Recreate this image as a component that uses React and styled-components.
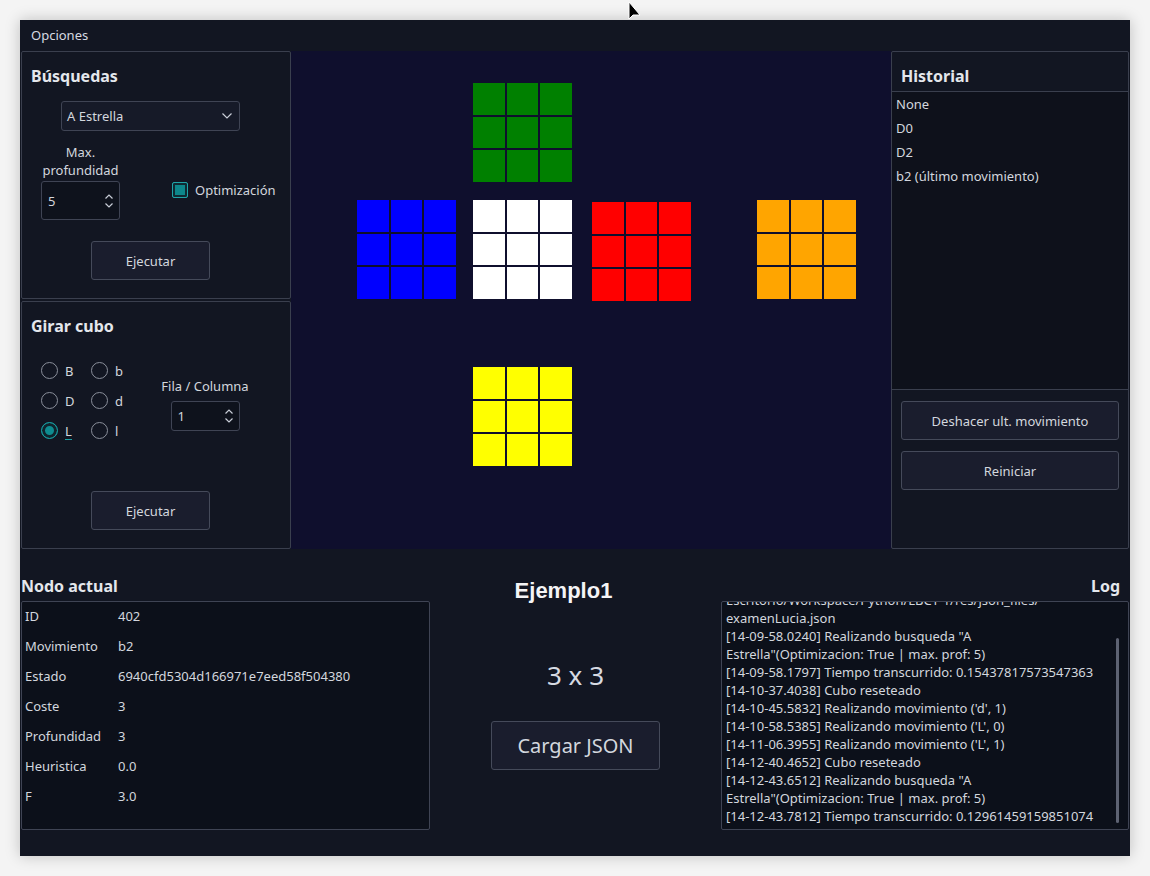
import React from 'react';
import styled, { createGlobalStyle } from 'styled-components';

const GlobalStyle = createGlobalStyle`
  html, body {
    margin: 0;
    padding: 0;
    background: #f4f4f4;
  }
  * {
    box-sizing: border-box;
  }
`;

const history = ['None', 'D0', 'D2', 'b2 (último movimiento)'];

const nodeInfo = [
  ['ID', '402'],
  ['Movimiento', 'b2'],
  ['Estado', '6940cfd5304d166971e7eed58f504380'],
  ['Coste', '3'],
  ['Profundidad', '3'],
  ['Heuristica', '0.0'],
  ['F', '3.0'],
];

const logLines = [
  'Escritorio/Workspace/Python/LBCT-1/res/json_files/',
  'examenLucia.json',
  '[14-09-58.0240] Realizando busqueda "A',
  'Estrella"(Optimizacion: True | max. prof: 5)',
  '[14-09-58.1797] Tiempo transcurrido: 0.15437817573547363',
  '[14-10-37.4038] Cubo reseteado',
  "[14-10-45.5832] Realizando movimiento ('d', 1)",
  "[14-10-58.5385] Realizando movimiento ('L', 0)",
  "[14-11-06.3955] Realizando movimiento ('L', 1)",
  '[14-12-40.4652] Cubo reseteado',
  '[14-12-43.6512] Realizando busqueda "A',
  'Estrella"(Optimizacion: True | max. prof: 5)',
  '[14-12-43.7812] Tiempo transcurrido: 0.12961459159851074',
];

// cara del cubo: posicion en el lienzo + color
const faces = [
  { x: 182, y: 32, color: '#008000' },
  { x: 66, y: 149, color: '#0000ff' },
  { x: 182, y: 149, color: '#ffffff' },
  { x: 301, y: 151, color: '#ff0000' },
  { x: 466, y: 149, color: '#ffa500' },
  { x: 182, y: 316, color: '#ffff00' },
];

const radios = [
  ['B', 'b'],
  ['D', 'd'],
  ['L', 'l'],
];

const SpinArrows = () => (
  <svg width="12" height="18" viewBox="0 0 12 18">
    <path d="M2.5 6.5 L6 3 L9.5 6.5" fill="none" stroke="#c9ced8" strokeWidth="1.2" />
    <path d="M2.5 11.5 L6 15 L9.5 11.5" fill="none" stroke="#c9ced8" strokeWidth="1.2" />
  </svg>
);

const Chevron = () => (
  <svg width="12" height="8" viewBox="0 0 12 8">
    <path d="M1.5 1.5 L6 6 L10.5 1.5" fill="none" stroke="#c9ced8" strokeWidth="1.2" />
  </svg>
);

const App = () => {
  return (
    <>
      <GlobalStyle />
      <Page>
        <Cursor width="16" height="20" viewBox="0 0 16 20">
          <path d="M1 0 L1 17 L5 13 L12 13 Z" fill="#000" stroke="#fff" strokeWidth="1" />
        </Cursor>
        <Window>
          <MenuBar>Opciones</MenuBar>
          <TopArea>
            <LeftColumn>
              <Panel>
                <PanelTitle>Búsquedas</PanelTitle>
                <Combo>
                  <span>A Estrella</span>
                  <Chevron />
                </Combo>
                <OptionsRow>
                  <DepthColumn>
                    <SmallLabel>Max.<br />profundidad</SmallLabel>
                    <SpinBox $width={79} $height={39}>
                      <span>5</span>
                      <SpinArrows />
                    </SpinBox>
                  </DepthColumn>
                  <CheckWrap>
                    <CheckBox />
                    <span>Optimización</span>
                  </CheckWrap>
                </OptionsRow>
                <Button $top={21}>Ejecutar</Button>
              </Panel>
              <Panel>
                <PanelTitle>Girar cubo</PanelTitle>
                <RotateRow>
                  <RadioGrid>
                    {radios.map((pair) =>
                      pair.map((label) => (
                        <RadioItem key={label}>
                          <Radio $checked={label === 'L'} />
                          <RadioLabel $mnemonic={label === 'L'}>{label}</RadioLabel>
                        </RadioItem>
                      ))
                    )}
                  </RadioGrid>
                  <RowColumn>
                    <SmallLabel>Fila / Columna</SmallLabel>
                    <SpinBox $width={69} $height={30}>
                      <span>1</span>
                      <SpinArrows />
                    </SpinBox>
                  </RowColumn>
                </RotateRow>
                <Button $top={46}>Ejecutar</Button>
              </Panel>
            </LeftColumn>

            <Canvas>
              {faces.map((f, i) => (
                <Face key={i} style={{ left: f.x, top: f.y }}>
                  {Array.from({ length: 9 }).map((_, j) => (
                    <Sticker key={j} $color={f.color} />
                  ))}
                </Face>
              ))}
            </Canvas>

            <RightPanel>
              <HistoryHeader>Historial</HistoryHeader>
              <HistoryList>
                {history.map((h) => (
                  <HistoryItem key={h}>{h}</HistoryItem>
                ))}
              </HistoryList>
              <HistoryActions>
                <WideButton>Deshacer ult. movimiento</WideButton>
                <WideButton>Reiniciar</WideButton>
              </HistoryActions>
            </RightPanel>
          </TopArea>

          <BottomArea>
            <InfoColumn $width={409}>
              <SectionLabel>Nodo actual</SectionLabel>
              <InfoBox>
                {nodeInfo.map(([k, v]) => (
                  <InfoRow key={k}>
                    <InfoKey>{k}</InfoKey>
                    <span>{v}</span>
                  </InfoRow>
                ))}
              </InfoBox>
            </InfoColumn>

            <CenterColumn>
              <ExampleName>Ejemplo1</ExampleName>
              <SizeText>3 x 3</SizeText>
              <LoadButton>Cargar JSON</LoadButton>
            </CenterColumn>

            <InfoColumn $width={408}>
              <SectionLabel $right>Log</SectionLabel>
              <LogBox>
                <LogContent>
                  {logLines.map((l, i) => (
                    <LogLine key={i}>{l}</LogLine>
                  ))}
                </LogContent>
                <ScrollThumb />
              </LogBox>
            </InfoColumn>
          </BottomArea>
        </Window>
      </Page>
    </>
  );
};

export default App;

const Page = styled.div`
  position: relative;
  width: 1150px;
  height: 876px;
  padding: 20px;
  background: #f4f4f4;
  font-family: "Noto Sans", "Open Sans", sans-serif;
  font-size: 13px;
  color: #d3d7de;
`;

const Cursor = styled.svg`
  position: absolute;
  left: 628px;
  top: 2px;
`;

const Window = styled.div`
  width: 1110px;
  height: 836px;
  background: #121622;
  box-shadow: 0 0 14px rgba(0, 0, 0, 0.22);
  display: flex;
  flex-direction: column;
  padding: 0 1px;
`;

const MenuBar = styled.div`
  height: 31px;
  padding: 0 10px 2px;
  display: flex;
  align-items: center;
  color: #d6dae1;
`;

const TopArea = styled.div`
  height: 498px;
  display: flex;
`;

const LeftColumn = styled.div`
  width: 270px;
  display: flex;
  flex-direction: column;
  gap: 2px;
`;

const Panel = styled.div`
  height: 248px;
  border: 1px solid #3a3f4e;
  border-radius: 2px;
  display: flex;
  flex-direction: column;
`;

const PanelTitle = styled.div`
  margin: 13px 0 0 9px;
  font-size: 16px;
  font-weight: bold;
  line-height: 22px;
  color: #e4e7ec;
`;

const Combo = styled.div`
  margin: 14px 0 0 39px;
  width: 179px;
  height: 30px;
  border: 1px solid #3f4454;
  border-radius: 3px;
  background: #161a28;
  display: flex;
  align-items: center;
  justify-content: space-between;
  padding: 0 6px 0 5px;
`;

const OptionsRow = styled.div`
  margin-top: 12px;
  padding-left: 19px;
  display: flex;
`;

const DepthColumn = styled.div`
  width: 79px;
  display: flex;
  flex-direction: column;
  align-items: center;
  gap: 2px;
`;

const SmallLabel = styled.div`
  text-align: center;
  line-height: 18px;
  white-space: nowrap;
`;

const SpinBox = styled.div`
  width: ${(p) => p.$width}px;
  height: ${(p) => p.$height}px;
  border: 1px solid #3f4454;
  border-radius: 3px;
  background: #0e121c;
  display: flex;
  align-items: center;
  justify-content: space-between;
  padding: 0 4px 0 6px;
`;

const CheckWrap = styled.div`
  margin: 39px 0 0 52px;
  height: 16px;
  display: flex;
  align-items: center;
  gap: 7px;
`;

const CheckBox = styled.div`
  width: 16px;
  height: 16px;
  border: 1px solid #20a4a8;
  border-radius: 2px;
  background: #0d878b;
  box-shadow: inset 0 0 0 2px #0f2a33;
`;

const Button = styled.div`
  margin: ${(p) => p.$top}px 0 0 69px;
  width: 119px;
  height: 39px;
  border: 1px solid #454a5a;
  border-radius: 3px;
  background: #1a1d2d;
  display: flex;
  align-items: center;
  justify-content: center;
  color: #d3d7de;
`;

const RotateRow = styled.div`
  margin-top: 18px;
  padding-left: 19px;
  display: flex;
`;

const RadioGrid = styled.div`
  display: grid;
  grid-template-columns: 50px 50px;
  grid-auto-rows: 30px;
`;

const RadioItem = styled.div`
  display: flex;
  align-items: center;
  gap: 7px;
`;

const Radio = styled.div`
  width: 17px;
  height: 17px;
  border-radius: 50%;
  border: 1px solid ${(p) => (p.$checked ? '#1aa0a4' : '#8a8f9b')};
  background: ${(p) => (p.$checked ? '#0e8c90' : 'transparent')};
  box-shadow: ${(p) => (p.$checked ? 'inset 0 0 0 3px #10242d' : 'none')};
`;

const RadioLabel = styled.span`
  line-height: 16px;
  border-bottom: 1px solid ${(p) => (p.$mnemonic ? '#1aa0a4' : 'transparent')};
  margin-top: 2px;
`;

const RowColumn = styled.div`
  margin: 22px 0 0 20px;
  width: 88px;
  display: flex;
  flex-direction: column;
  align-items: center;
  gap: 6px;
`;

const Canvas = styled.div`
  position: relative;
  width: 600px;
  background: #0f0f2d;
`;

const Face = styled.div`
  position: absolute;
  width: 99px;
  height: 99px;
  display: grid;
  grid-template-columns: repeat(3, 1fr);
  grid-template-rows: repeat(3, 1fr);
  gap: 2px;
`;

const Sticker = styled.div`
  background: ${(p) => p.$color};
`;

const RightPanel = styled.div`
  width: 238px;
  border: 1px solid #3a3f4e;
  border-radius: 2px;
  display: flex;
  flex-direction: column;
`;

const HistoryHeader = styled.div`
  height: 40px;
  padding: 13px 0 0 9px;
  font-size: 16px;
  font-weight: bold;
  line-height: 22px;
  color: #e4e7ec;
  border-bottom: 1px solid #3a3f4e;
`;

const HistoryList = styled.div`
  height: 298px;
  background: #0e111b;
  border-bottom: 1px solid #3a3f4e;
`;

const HistoryItem = styled.div`
  height: 24px;
  line-height: 24px;
  padding-left: 4px;
`;

const HistoryActions = styled.div`
  padding: 11px 9px 0;
  display: flex;
  flex-direction: column;
  gap: 11px;
`;

const WideButton = styled(Button)`
  margin: 0;
  width: 100%;
`;

const BottomArea = styled.div`
  flex: 1;
  display: flex;
`;

const InfoColumn = styled.div`
  width: ${(p) => p.$width}px;
  padding-top: 26px;
  display: flex;
  flex-direction: column;
`;

const SectionLabel = styled.div`
  font-size: 16px;
  font-weight: bold;
  line-height: 22px;
  color: #e4e7ec;
  text-align: ${(p) => (p.$right ? 'right' : 'left')};
  padding-right: ${(p) => (p.$right ? '9px' : '0')};
  margin-bottom: 4px;
`;

const InfoBox = styled.div`
  height: 229px;
  border: 1px solid #3f4454;
  border-radius: 2px;
  background: #0c101a;
`;

const InfoRow = styled.div`
  height: 30px;
  display: flex;
  align-items: center;
  padding: 0 0 2px 3px;
`;

const InfoKey = styled.span`
  width: 93px;
`;

const CenterColumn = styled.div`
  width: 291px;
  display: flex;
  flex-direction: column;
  align-items: center;
`;

const ExampleName = styled.div`
  margin-top: 28px;
  padding-right: 24px;
  font-family: "Liberation Sans", Arial, sans-serif;
  font-size: 22px;
  font-weight: bold;
  line-height: 28px;
  color: #f4f4f6;
`;

const SizeText = styled.div`
  margin-top: 54px;
  font-size: 26px;
  line-height: 32px;
  color: #d6dae2;
`;

const LoadButton = styled.div`
  margin-top: 30px;
  width: 169px;
  height: 49px;
  border: 1px solid #454a5a;
  border-radius: 3px;
  background: #1a1d2d;
  display: flex;
  align-items: center;
  justify-content: center;
  font-size: 20px;
  color: #d3d7de;
`;

const LogBox = styled.div`
  position: relative;
  height: 229px;
  border: 1px solid #3f4454;
  border-radius: 2px;
  background: #0c101a;
  overflow: hidden;
`;

const LogContent = styled.div`
  margin-top: -11px;
  padding-left: 4px;
`;

const LogLine = styled.div`
  height: 18px;
  line-height: 18px;
  white-space: nowrap;
`;

const ScrollThumb = styled.div`
  position: absolute;
  right: 9px;
  top: 36px;
  width: 3px;
  height: 185px;
  border-radius: 2px;
  background: #5d6272;
`;
